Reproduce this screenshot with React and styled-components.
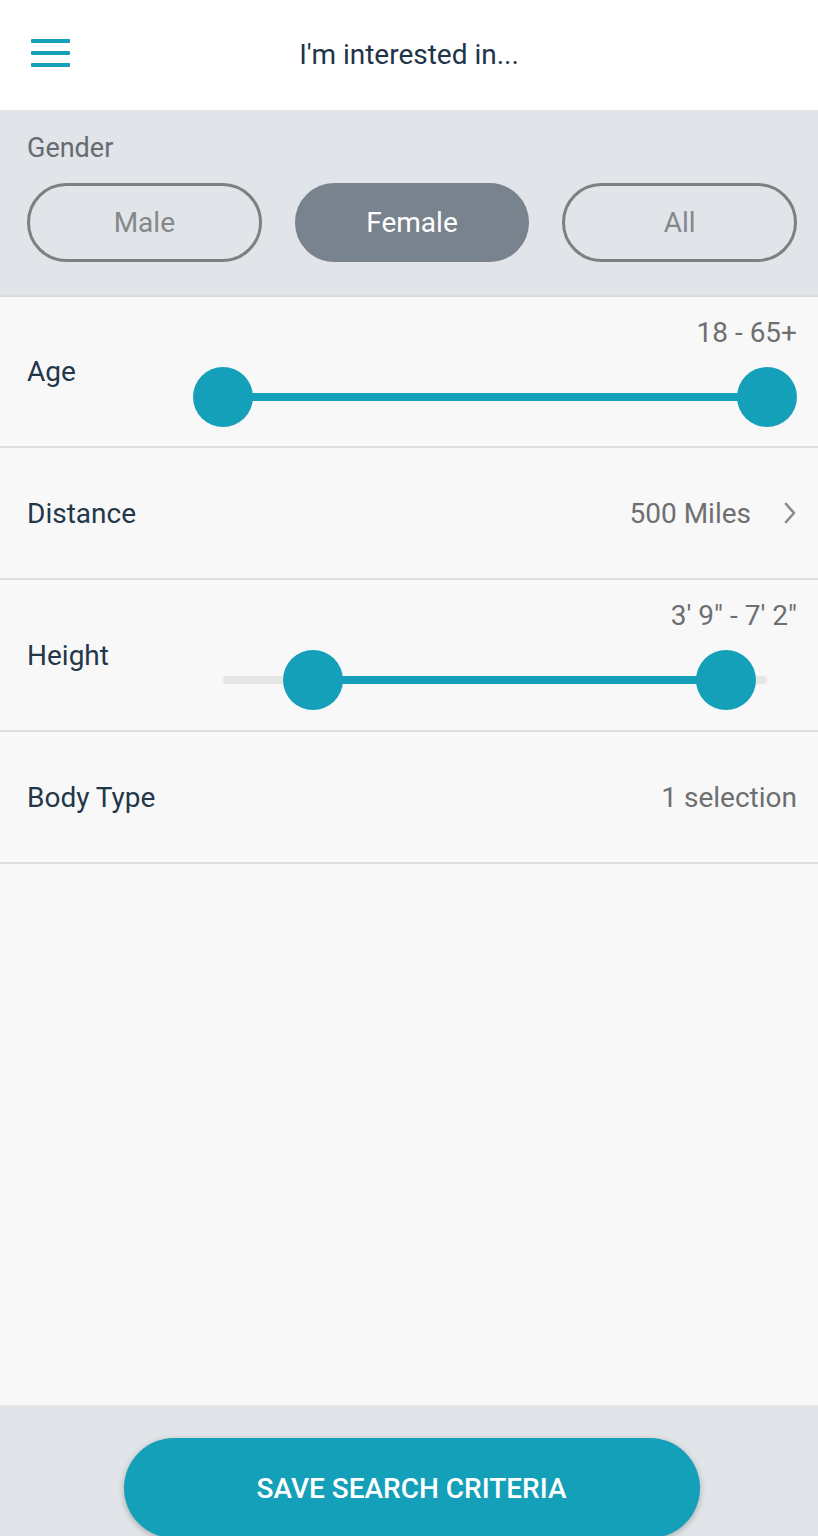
import React from "react";
import styled, { createGlobalStyle } from "styled-components";

const Global = createGlobalStyle`
  html, body { margin: 0; padding: 0; }
  body { font-family: Roboto, "Noto Sans", sans-serif; background: #f8f8f8; }
`;

const TEAL = "#15a0b9";

const Page = styled.div`
  width: 818px;
  height: 1536px;
  display: flex;
  flex-direction: column;
  overflow: hidden;
  background: #f8f8f8;
`;

const Header = styled.header`
  height: 110px;
  flex: none;
  background: #fff;
  display: flex;
  align-items: center;
  position: relative;
  justify-content: center;
`;

const MenuBtn = styled.button`
  position: absolute;
  left: 31px;
  top: 39px;
  width: 40px;
  height: 28px;
  padding: 0;
  border: 0;
  background: none;
  display: flex;
  flex-direction: column;
  justify-content: space-between;

  span {
    display: block;
    height: 4px;
    width: 39px;
    background: ${TEAL};
    border-radius: 1px;
  }
`;

const Title = styled.h1`
  margin: 0;
  font-size: 28px;
  font-weight: 400;
  color: #1f3449;
  margin-top: -2px;
`;

const GenderBox = styled.section`
  flex: none;
  background: #e1e4e8;
  padding: 22px 21px 33px 27px;
  border-bottom: 2px solid #dcdcdc;
`;

const GroupLabel = styled.div`
  font-size: 27px;
  line-height: 32px;
  color: #666b70;
  margin-bottom: 19px;
`;

const Pills = styled.div`
  display: grid;
  grid-template-columns: repeat(3, 1fr);
  gap: 33px;
`;

const Pill = styled.button`
  height: 79px;
  border-radius: 40px;
  font-family: Roboto, sans-serif;
  font-size: 28px;
  border: 3px solid ${(p) => (p.$active ? "#79838e" : "#7d7f82")};
  background: ${(p) => (p.$active ? "#79838e" : "transparent")};
  color: ${(p) => (p.$active ? "#fff" : "#85888b")};
`;

const Row = styled.div`
  display: flex;
  align-items: center;
  height: ${(p) => p.$h}px;
  padding: 0 21px 0 27px;
  border-bottom: 2px solid #dedede;
  box-sizing: border-box;
`;

const Label = styled.div`
  width: 166px;
  flex: none;
  font-size: 28px;
  color: #23374a;
`;

const Value = styled.div`
  margin-left: auto;
  font-size: 28px;
  color: #6e6f71;
  display: flex;
  align-items: center;
  gap: 32px;
`;

const SliderCol = styled.div`
  flex: 1;
  display: flex;
  flex-direction: column;
  gap: 18px;
`;

const SliderValue = styled.div`
  text-align: right;
  font-size: 28px;
  line-height: 32px;
  color: #6e6f71;
`;

const SliderBox = styled.div`
  height: 60px;
  padding: 0 30px;
  display: flex;
  align-items: center;
`;

const Track = styled.div`
  position: relative;
  flex: 1;
  height: 8px;
  background: #e6e6e6;
  border-radius: 4px;
`;

const Fill = styled.div`
  position: absolute;
  top: 0;
  bottom: 0;
  background: ${TEAL};
`;

const Thumb = styled.div`
  position: absolute;
  top: 50%;
  width: 60px;
  height: 60px;
  margin: -30px 0 0 -30px;
  border-radius: 50%;
  background: ${TEAL};
`;

const Spacer = styled.div`
  flex: 1;
`;

const Footer = styled.footer`
  flex: none;
  height: 131px;
  background: #e1e4e8;
  border-top: 1px solid #e8e8e8;
  display: flex;
  justify-content: center;
  padding: 32px 0 0 5px;
  box-sizing: border-box;
`;

const SaveBtn = styled.button`
  width: 576px;
  height: 100px;
  flex: none;
  border: 0;
  border-radius: 50px;
  background: ${TEAL};
  color: #fff;
  font-family: Roboto, sans-serif;
  font-size: 28px;
  font-weight: 500;
  box-shadow: 0 2px 6px rgba(0, 0, 0, 0.25);
`;

function Slider({ value, from, to }) {
  return (
    <SliderCol>
      <SliderValue>{value}</SliderValue>
      <SliderBox>
        <Track>
          <Fill style={{ left: `${from}%`, right: `${100 - to}%` }} />
          <Thumb style={{ left: `${from}%` }} />
          <Thumb style={{ left: `${to}%` }} />
        </Track>
      </SliderBox>
    </SliderCol>
  );
}

const Chevron = () => (
  <svg width="14" height="24" viewBox="0 0 14 24" fill="none">
    <polyline points="3,3 11,12 3,21" stroke="#8a8a8a" strokeWidth="2.6" strokeLinecap="round" strokeLinejoin="round" />
  </svg>
);

export default function App() {
  return (
    <Page>
      <Global />
      <Header>
        <MenuBtn aria-label="menu">
          <span />
          <span />
          <span />
        </MenuBtn>
        <Title>I'm interested in...</Title>
      </Header>

      <GenderBox>
        <GroupLabel>Gender</GroupLabel>
        <Pills>
          <Pill>Male</Pill>
          <Pill $active>Female</Pill>
          <Pill>All</Pill>
        </Pills>
      </GenderBox>

      <Row $h={151}>
        <Label>Age</Label>
        <Slider value="18 - 65+" from={0} to={100} />
      </Row>
      <Row $h={132}>
        <Label>Distance</Label>
        <Value>
          500 Miles
          <Chevron />
        </Value>
      </Row>
      <Row $h={152}>
        <Label>Height</Label>
        <Slider value={`3' 9" - 7' 2"`} from={16.5} to={92.5} />
      </Row>
      <Row $h={132}>
        <Label>Body Type</Label>
        <Value>1 selection</Value>
      </Row>

      <Spacer />

      <Footer>
        <SaveBtn>SAVE SEARCH CRITERIA</SaveBtn>
      </Footer>
    </Page>
  );
}
